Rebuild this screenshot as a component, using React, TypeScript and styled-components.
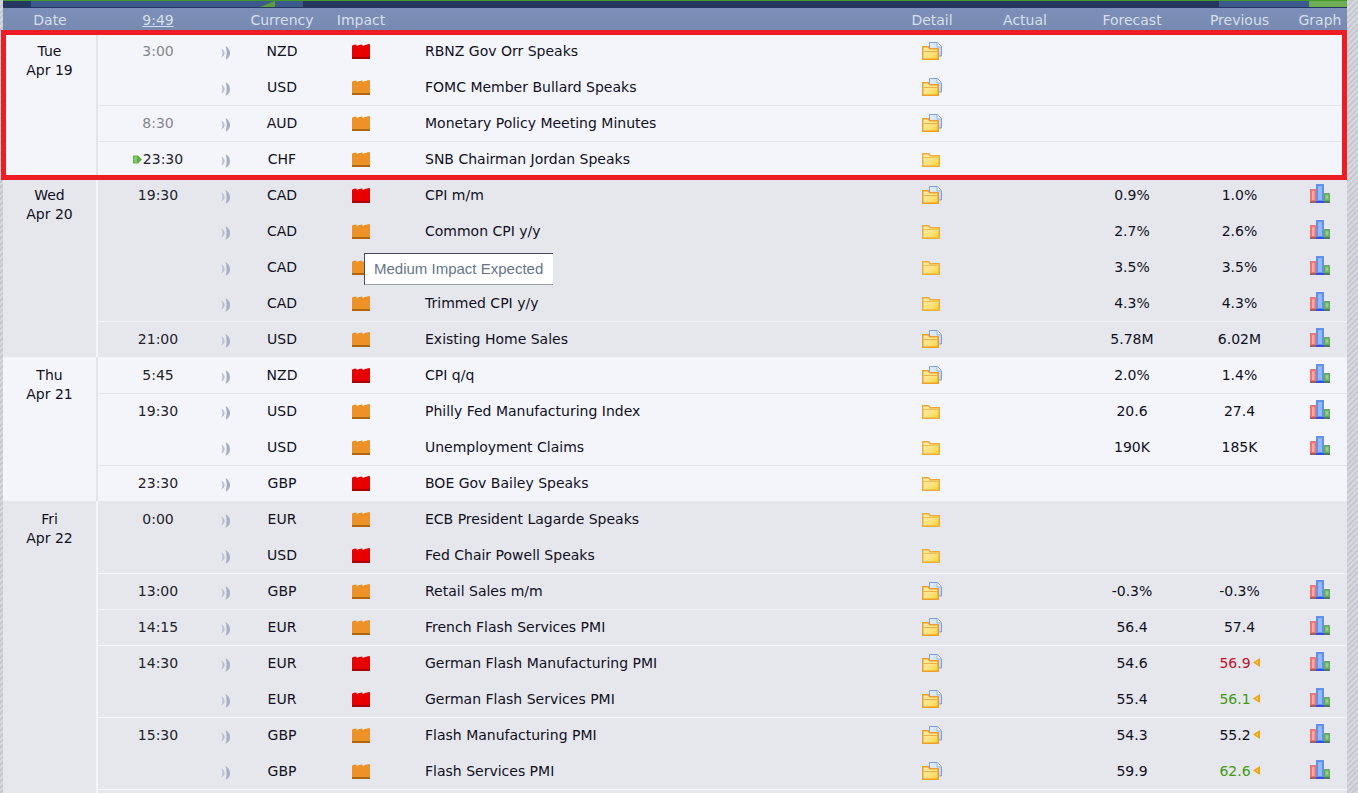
import React from "react";
import styled, { createGlobalStyle } from "styled-components";

const Global = createGlobalStyle`
  html, body { margin: 0; padding: 0; height: 793px; overflow: hidden; background: #c9ccd4; }
  #root { height: 793px; }
`;

const Page = styled.div`
  width: 1358px; height: 793px; overflow: hidden; display: flex; flex-direction: column;
  font-family: "DejaVu Sans", Verdana, sans-serif; font-size: 14px; color: #10101e;
  background: repeating-linear-gradient(135deg, #c6c9d1 0 2px, #d6d8de 2px 4px);
`;
const TopBar = styled.div`
  height: 8px; box-sizing: border-box; flex: none; display: flex; margin-right: 11px; margin-left: 3px;
  border-top: 1px solid #3f9a2c; background: #25375f;
`;
const TopSeg = styled.div<{ $w: number; $c: string }>`
  width: ${p => p.$w}px; flex: none; background: ${p => p.$c}; position: relative; margin-bottom: 1px;
`;
const TopTri = styled.div`
  position: absolute; right: 0; bottom: 0; width: 15px; height: 6px;
  background: #5f9e3f; clip-path: polygon(100% 0, 100% 100%, 0 100%);
`;
const HeaderRow = styled.div`
  height: 25px; flex: none; margin: 0 11px 0 3px; display: grid; align-items: center;
  grid-template-columns: 94px 122px 14px 98px 60px 501px 80px 106px 108px 107px 54px;
  background: linear-gradient(#7b8fb8, #768ab1); color: #d8dfec; padding-bottom: 2px; box-sizing: border-box;
`;
const HeadCell = styled.div<{ $u?: boolean }>`
  text-align: center; text-decoration: ${p => (p.$u ? "underline" : "none")};
`;
const Table = styled.div`
  margin: 0 11px 0 3px; display: flex; flex-direction: column;
`;
const Day = styled.section<{ $dark: boolean }>`
  position: relative; display: flex; background: ${p => (p.$dark ? "#e6e7ec" : "#f4f5fa")};
  --line: ${p => (p.$dark ? "#f4f5fa" : "#e4e5ea")};
`;
const DateCol = styled.div`
  width: 93px; flex: none; border-right: 2px solid var(--line); box-sizing: content-box;
  padding-top: 9px; text-align: center; line-height: 19px; margin-right: -1px;
`;
const Rows = styled.div`
  flex: 1; display: flex; flex-direction: column; min-width: 0;
`;
const Row = styled.div<{ $line: boolean }>`
  height: 36px; box-sizing: border-box; display: grid; align-items: center;
  grid-template-columns: 122px 14px 98px 60px 501px 80px 106px 108px 107px 54px;
  border-top: ${p => (p.$line ? "1px solid var(--line)" : "0")};
  padding-bottom: ${p => (p.$line ? "2px" : "1px")};
`;
const Cell = styled.div`
  display: flex; align-items: center; justify-content: center; white-space: nowrap;
`;
const TimeCell = styled(Cell)<{ $past: boolean }>`
  color: ${p => (p.$past ? "#85858c" : "#22222a")}; gap: 1px;
`;
const EventCell = styled.div`
  padding-left: 34px; white-space: nowrap;
`;
const PrevText = styled.span<{ $c?: string }>`
  color: ${p => p.$c || "inherit"};
`;
const PrevCell = styled(Cell)`
  gap: 2px;
`;
const Highlight = styled.div`
  position: absolute; left: -2px; top: -3px; right: 0; bottom: -3px;
  border: 5px solid #ee1c25; box-sizing: border-box; z-index: 2; pointer-events: none;
`;
const Tooltip = styled.div`
  position: absolute; left: 361px; top: 76px; width: 189px; height: 32px; box-sizing: border-box;
  background: #fff; border-top: 1px solid #444a55; border-left: 1px solid #444a55;
  border-bottom: 1px solid #9a9ca4; padding-left: 9px; line-height: 30px;
  font-family: "Liberation Sans", Arial, sans-serif; font-size: 15px; color: #65758a; z-index: 3;
  white-space: nowrap;
`;
const Gradients = styled.svg`
  position: absolute; width: 0; height: 0;
`;
const IconSvg = styled.svg<{ $mt?: number; $ml?: number }>`
  display: block; flex: none;
  margin-top: ${p => p.$mt ?? 2}px;
  margin-left: ${p => p.$ml ?? 0}px;
`;

const Sound = () => (
  <IconSvg width="10" height="14" viewBox="0 0 10 14" $mt={4}>
    <path d="M.3 2.5C4.5 4.5 5 9.5.3 11.5C1.8 9 1.8 5 .3 2.5Z" fill="#b8bfce" />
    <path d="M4.5 0C9.5 2.5 11.5 10.5 4.5 14C6 10 6 4 4.5 0Z" fill="#a6afc2" />
  </IconSvg>
);
const Impact = ({ high }: { high: boolean }) => (
  <IconSvg width="18" height="15" viewBox="0 0 18 15" $mt={2}>
    <path d="M0 2 L1 1 L4 .5 L5 2 L7 1 L10 .5 L11 2 L13 1 L17 0 L18 .5 V15 H0 Z" fill={high ? "#e60000" : "#ec9226"} />
    <rect y="13" width="18" height="2" fill={high ? "#a80606" : "#b0660f"} />
  </IconSvg>
);
const Defs = () => (
  <Gradients aria-hidden="true">
    <defs>
      <linearGradient id="fold" x1="0" y1="0" x2="1" y2="1">
        <stop offset="0" stopColor="#fdeeb4" />
        <stop offset=".6" stopColor="#fbe27a" />
        <stop offset="1" stopColor="#f6d21e" />
      </linearGradient>
      <linearGradient id="docf" x1="0" y1="0" x2="1" y2="1">
        <stop offset="0" stopColor="#e6effc" />
        <stop offset="1" stopColor="#bcd2f3" />
      </linearGradient>
    </defs>
  </Gradients>
);
const FolderIcon = ({ doc }: { doc: boolean }) =>
  doc ? (
    <IconSvg width="20" height="18" viewBox="0 0 20 18" $mt={0}>
      <path d="M7.5.5h8l4 4v9.5h-12z" fill="url(#docf)" stroke="#7f9dd8" />
      <path d="M15 .5v4.5h4.5" fill="#f2f6fd" stroke="#9db6e4" />
      <path d="M.75 4.75h5.5l1.5 2h8.5v10.5H.75z" fill="url(#fold)" stroke="#ea9f2e" strokeWidth="1.5" />
      <path d="M1.5 9.5h14.5" stroke="#e8b048" />
    </IconSvg>
  ) : (
    <IconSvg width="18" height="14" viewBox="0 0 18 14" $mt={3} $ml={-2}>
      <path d="M.75.75h6l1.5 2h9v10.5H.75z" fill="url(#fold)" stroke="#eeac40" strokeWidth="1.5" />
      <path d="M1.5 4.5h15" stroke="#f0c050" />
    </IconSvg>
  );
const Graph = () => (
  <IconSvg width="20" height="19" viewBox="0 0 20 19" $mt={-2}>
    <rect y="5" width="6" height="12" fill="#ee7672" />
    <rect x="2" y="7" width="2.5" height="9" fill="#f8a8a4" />
    <rect x="6" width="8" height="17" fill="#5f92e8" />
    <rect x="8" y="2" width="4" height="14" fill="#93b8f4" />
    <rect x="14" y="9" width="6" height="8" fill="#66ab60" />
    <rect x="15.5" y="11" width="3" height="4.5" fill="#92cc86" />
    <rect y="17" width="6" height="2" fill="#a0606a" />
    <rect x="6" y="17" width="8" height="2" fill="#3450dc" />
    <rect x="14" y="17" width="6" height="2" fill="#4f7a68" />
  </IconSvg>
);
const NowArrow = () => (
  <IconSvg width="9" height="9" viewBox="0 0 9 9" $mt={2}>
    <path d="M0 .5h5l4 4-4 4H0z" fill="#5cb043" />
    <path d="M1 1.5h3v6H1z" fill="#86c96d" />
  </IconSvg>
);
const Revise = () => (
  <IconSvg width="7" height="9" viewBox="0 0 7 9" $mt={0}>
    <path d="M7 0v9L0 4.5z" fill="#eda40f" />
    <path d="M5 3v3L2.8 4.5z" fill="#f8cd6a" />
  </IconSvg>
);

type Ev = {
  t?: string; past?: boolean; now?: boolean; cur: string; hi?: boolean; name?: string;
  doc?: boolean; f?: string; p?: string; pc?: string; rev?: boolean; g?: boolean; line?: boolean;
};
type DayT = { d: string; m: string; ev: Ev[]; box?: boolean; tip?: boolean };
const RED = "#c0102a";
const GREEN = "#3f9c12";

const days: DayT[] = [
  { d: "Tue", m: "Apr 19", box: true, ev: [
    { t: "3:00", past: true, cur: "NZD", hi: true, name: "RBNZ Gov Orr Speaks", doc: true },
    { cur: "USD", name: "FOMC Member Bullard Speaks", doc: true },
    { t: "8:30", past: true, cur: "AUD", name: "Monetary Policy Meeting Minutes", doc: true, line: true },
    { t: "23:30", now: true, cur: "CHF", name: "SNB Chairman Jordan Speaks", line: true },
  ] },
  { d: "Wed", m: "Apr 20", tip: true, ev: [
    { t: "19:30", cur: "CAD", hi: true, name: "CPI m/m", doc: true, f: "0.9%", p: "1.0%", g: true },
    { cur: "CAD", name: "Common CPI y/y", f: "2.7%", p: "2.6%", g: true },
    { cur: "CAD", f: "3.5%", p: "3.5%", g: true },
    { cur: "CAD", name: "Trimmed CPI y/y", f: "4.3%", p: "4.3%", g: true },
    { t: "21:00", cur: "USD", name: "Existing Home Sales", doc: true, f: "5.78M", p: "6.02M", g: true, line: true },
  ] },
  { d: "Thu", m: "Apr 21", ev: [
    { t: "5:45", cur: "NZD", hi: true, name: "CPI q/q", doc: true, f: "2.0%", p: "1.4%", g: true },
    { t: "19:30", cur: "USD", name: "Philly Fed Manufacturing Index", f: "20.6", p: "27.4", g: true, line: true },
    { cur: "USD", name: "Unemployment Claims", f: "190K", p: "185K", g: true },
    { t: "23:30", cur: "GBP", hi: true, name: "BOE Gov Bailey Speaks", line: true },
  ] },
  { d: "Fri", m: "Apr 22", ev: [
    { t: "0:00", cur: "EUR", name: "ECB President Lagarde Speaks" },
    { cur: "USD", hi: true, name: "Fed Chair Powell Speaks" },
    { t: "13:00", cur: "GBP", name: "Retail Sales m/m", doc: true, f: "-0.3%", p: "-0.3%", g: true, line: true },
    { t: "14:15", cur: "EUR", name: "French Flash Services PMI", doc: true, f: "56.4", p: "57.4", g: true, line: true },
    { t: "14:30", cur: "EUR", hi: true, name: "German Flash Manufacturing PMI", doc: true, f: "54.6", p: "56.9", pc: RED, rev: true, g: true, line: true },
    { cur: "EUR", hi: true, name: "German Flash Services PMI", doc: true, f: "55.4", p: "56.1", pc: GREEN, rev: true, g: true },
    { t: "15:30", cur: "GBP", name: "Flash Manufacturing PMI", doc: true, f: "54.3", p: "55.2", rev: true, g: true, line: true },
    { cur: "GBP", name: "Flash Services PMI", doc: true, f: "59.9", p: "62.6", pc: GREEN, rev: true, g: true },
  ] },
];

export default function App() {
  return (
    <Page>
      <Global />
      <Defs />
      <TopBar>
        <TopSeg $w={28} $c="#25375f" />
        <TopSeg $w={244} $c="#3d5a8e"><TopTri /></TopSeg>
        <TopSeg $w={28} $c="#3d5a8e" />
        <TopSeg $w={916} $c="#25375f" />
        <TopSeg $w={90} $c="#3d5a8e" />
        <TopSeg $w={38} $c="#6fae55" />
      </TopBar>
      <HeaderRow>
        <HeadCell>Date</HeadCell>
        <HeadCell $u>9:49</HeadCell>
        <HeadCell />
        <HeadCell>Currency</HeadCell>
        <HeadCell>Impact</HeadCell>
        <HeadCell />
        <HeadCell>Detail</HeadCell>
        <HeadCell>Actual</HeadCell>
        <HeadCell>Forecast</HeadCell>
        <HeadCell>Previous</HeadCell>
        <HeadCell>Graph</HeadCell>
      </HeaderRow>
      <Table>
        {days.map((day, i) => (
          <Day key={day.m} $dark={i % 2 === 1 || i === 3}>
            <DateCol>{day.d}<br />{day.m}</DateCol>
            <Rows>
              {day.ev.map((e, j) => (
                <Row key={j} $line={!!e.line}>
                  <TimeCell $past={!!e.past}>{e.now && <NowArrow />}{e.t}</TimeCell>
                  <Cell><Sound /></Cell>
                  <Cell>{e.cur}</Cell>
                  <Cell><Impact high={!!e.hi} /></Cell>
                  <EventCell>{e.name}</EventCell>
                  <Cell><FolderIcon doc={!!e.doc} /></Cell>
                  <Cell />
                  <Cell>{e.f}</Cell>
                  <PrevCell><PrevText $c={e.pc}>{e.p}</PrevText>{e.rev && <Revise />}</PrevCell>
                  <Cell>{e.g && <Graph />}</Cell>
                </Row>
              ))}
              {day.d === "Fri" && <Row $line />}
            </Rows>
            {day.box && <Highlight />}
            {day.tip && <Tooltip>Medium Impact Expected</Tooltip>}
          </Day>
        ))}
      </Table>
    </Page>
  );
}
